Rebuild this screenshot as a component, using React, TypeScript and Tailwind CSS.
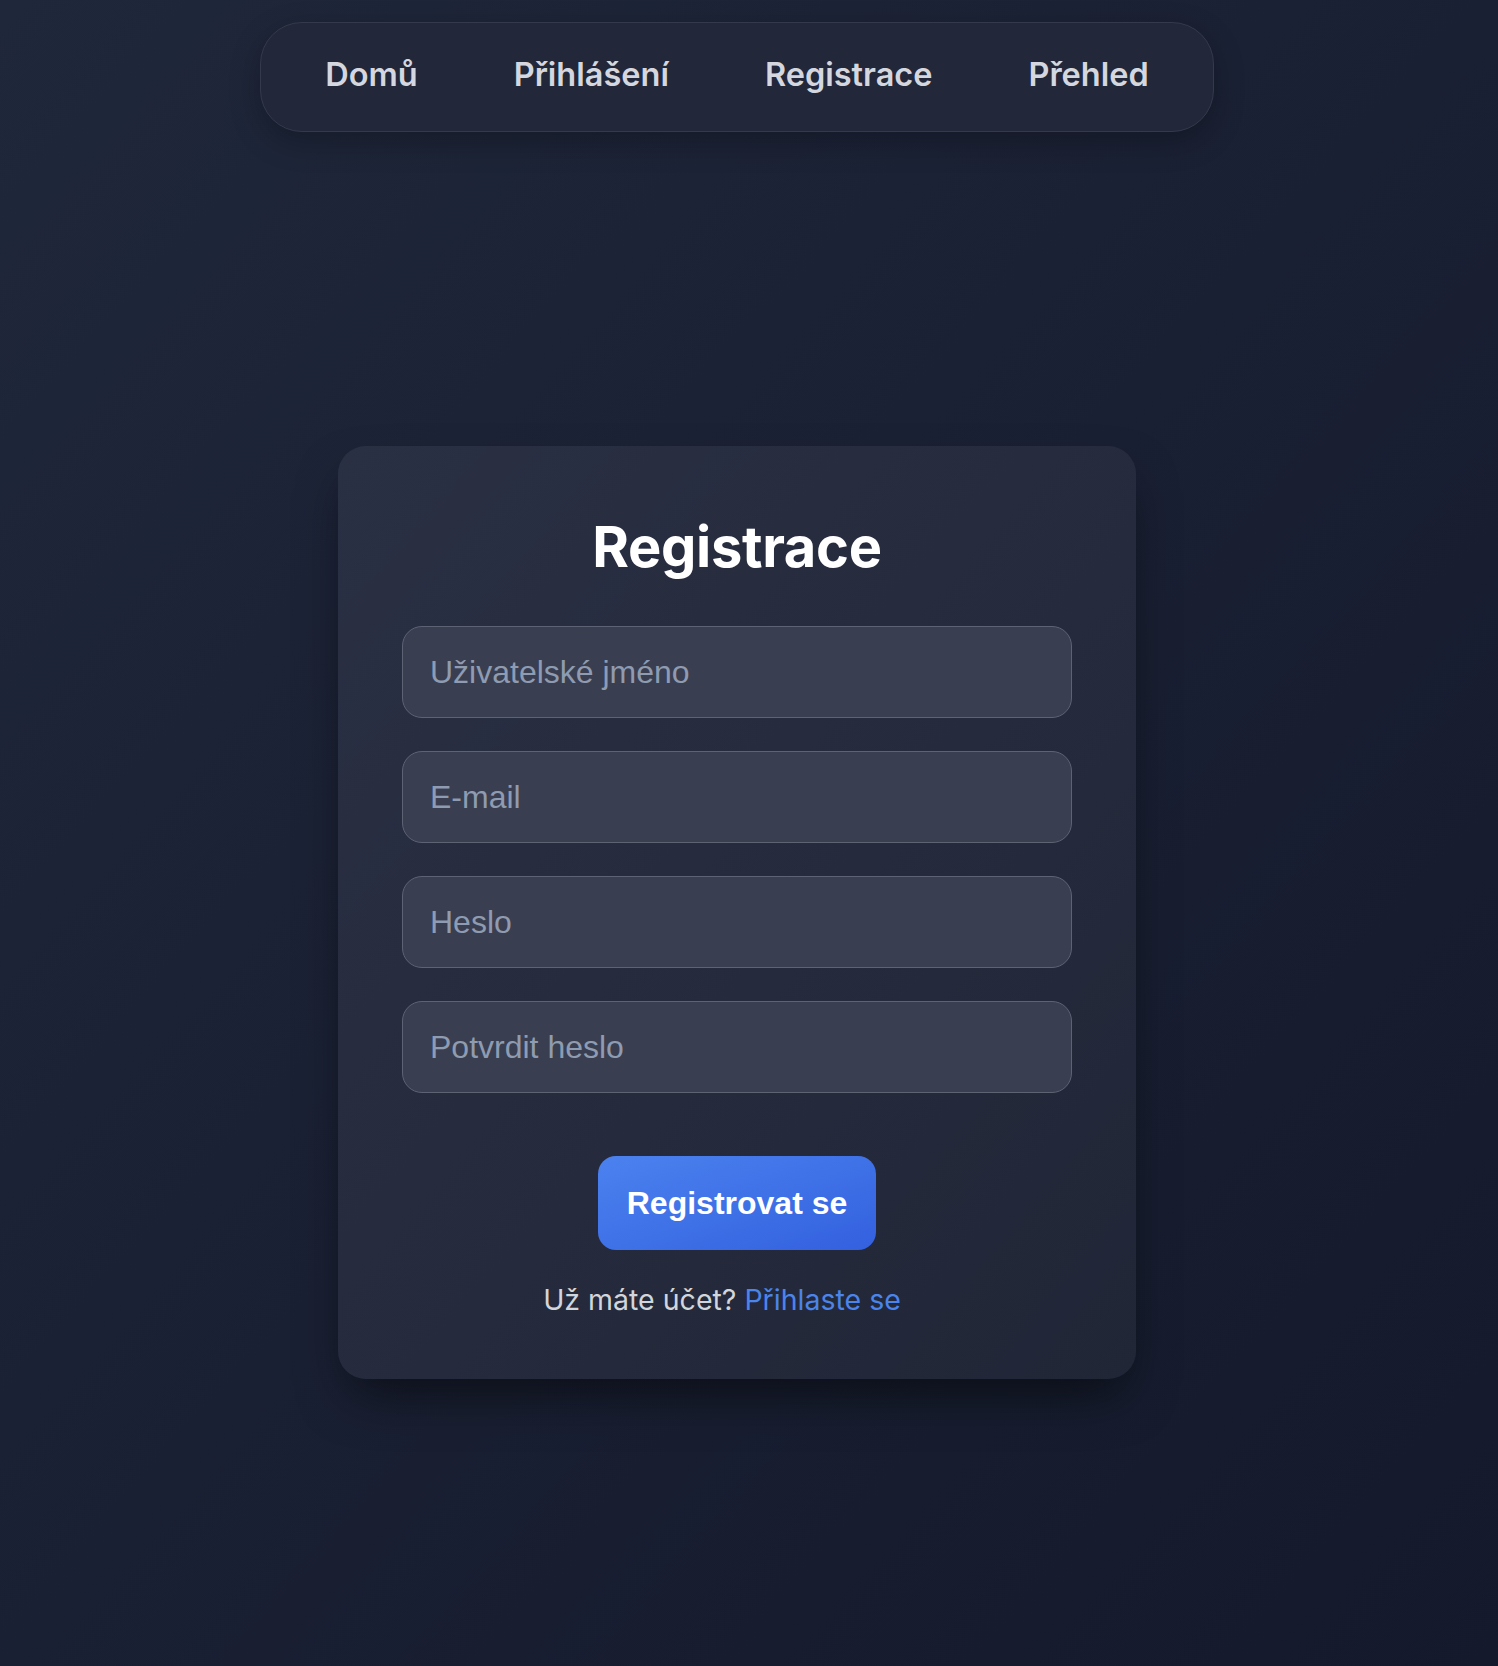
import React from "react";

const navItems = ["Domů", "Přihlášení", "Registrace", "Přehled"];
const fields = [
  { ph: "Uživatelské jméno", type: "text" },
  { ph: "E-mail", type: "email" },
  { ph: "Heslo", type: "password" },
  { ph: "Potvrdit heslo", type: "password" },
];

export default function App() {
  return (
    <div className="min-h-screen w-full bg-linear-to-br from-[#1f273a] via-[#1a2033] to-[#141a2b] font-['Inter',sans-serif] pr-[24px] pt-[22px] pb-[60px] flex flex-col items-center">
      <nav className="flex items-center gap-[96px] h-[110px] pb-[4px] px-[64px] rounded-[42px] border border-[#343a4c] bg-[#222839] shadow-[0_10px_30px_rgba(0,0,0,0.25)]">
        {navItems.map((i) => (
          <a key={i} href="#" className="text-[32.5px] font-semibold text-[#d4d7df] leading-none">
            {i}
          </a>
        ))}
      </nav>
      <div className="mt-[314px] w-[798px] rounded-[28px] bg-linear-to-br from-[#2a3043] to-[#212637] shadow-[0_25px_50px_-12px_rgba(0,0,0,0.55)] px-[64px] pt-[67px] pb-[58px] flex flex-col items-center">
        <h1 className="text-[56px] font-bold leading-[68px] tracking-[-0.006em] text-white">Registrace</h1>
        <div className="mt-[45px] w-full flex flex-col gap-[33px]">
          {fields.map((f) => (
            <input
              key={f.ph}
              type={f.type}
              placeholder={f.ph}
              className="h-[92px] w-full rounded-[20px] border border-[#5d6373] bg-[#393f50] px-[27px] text-[32px] font-['Liberation_Sans',Arial,sans-serif] text-white placeholder:text-[#8f9bb1] outline-none"
            />
          ))}
        </div>
        <button className="mt-[63px] h-[94px] px-[29px] rounded-[18px] bg-linear-to-br from-[#4b82ef] to-[#3460df] text-white text-[32px] font-bold font-['Liberation_Sans',Arial,sans-serif]">
          Registrovat se
        </button>
        <p className="mt-[29px] mr-[30px] text-[28.5px] leading-[42px] text-[#d1d5dc]">
          Už máte účet?{" "}
          <a href="#" className="text-[#4b84ea]">
            Přihlaste se
          </a>
        </p>
      </div>
    </div>
  );
}
